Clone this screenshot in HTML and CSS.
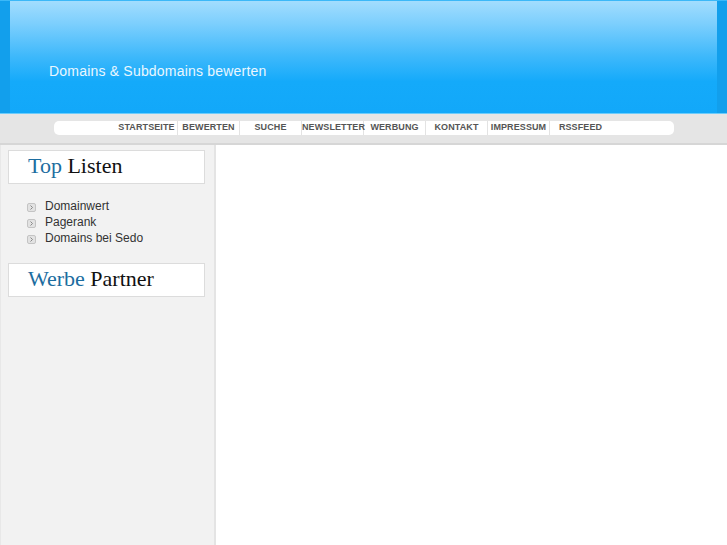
FILE: index.html
```html
<!DOCTYPE html>
<html lang="de">
<head>
<meta charset="utf-8">
<title>Domains &amp; Subdomains bewerten</title>
<link rel="stylesheet" href="styles.css">
</head>
<body>
<div class="header">
  <div class="header-inner">
    <div class="slogan">Domains &amp; Subdomains bewerten</div>
  </div>
</div>
<div class="navbar">
  <ul class="nav">
    <li>STARTSEITE</li>
    <li>BEWERTEN</li>
    <li>SUCHE</li>
    <li>NEWSLETTER</li>
    <li>WERBUNG</li>
    <li>KONTAKT</li>
    <li>IMPRESSUM</li>
    <li>RSSFEED</li>
  </ul>
</div>
<div class="page">
  <div class="sidebar">
    <div class="box"><span class="hl">Top</span> Listen</div>
    <ul class="links">
      <li><span class="bullet"><svg width="9" height="9" viewBox="0 0 9 9"><rect x="0.5" y="0.5" width="8" height="8" rx="1.5" fill="#e2e2e2" stroke="#c4c4c4"/><path d="M3.5 2.5 L5.5 4.5 L3.5 6.5" fill="none" stroke="#888" stroke-width="1"/></svg></span>Domainwert</li>
      <li><span class="bullet"><svg width="9" height="9" viewBox="0 0 9 9"><rect x="0.5" y="0.5" width="8" height="8" rx="1.5" fill="#e2e2e2" stroke="#c4c4c4"/><path d="M3.5 2.5 L5.5 4.5 L3.5 6.5" fill="none" stroke="#888" stroke-width="1"/></svg></span>Pagerank</li>
      <li><span class="bullet"><svg width="9" height="9" viewBox="0 0 9 9"><rect x="0.5" y="0.5" width="8" height="8" rx="1.5" fill="#e2e2e2" stroke="#c4c4c4"/><path d="M3.5 2.5 L5.5 4.5 L3.5 6.5" fill="none" stroke="#888" stroke-width="1"/></svg></span>Domains bei Sedo</li>
    </ul>
    <div class="box"><span class="hl">Werbe</span> Partner</div>
  </div>
  <div class="content"></div>
</div>
</body>
</html>
```
FILE: styles.css
```css
html, body {
  margin: 0;
  padding: 0;
  height: 100%;
}
body {
  font-family: "Liberation Sans", Arial, sans-serif;
  background: #ffffff;
  display: flex;
  flex-direction: column;
  overflow: hidden;
}
.header {
  flex: none;
  height: 114px;
  background: #129fec;
  border-top: 1px solid #3bb8f8;
  border-bottom: 1px solid #6cccfb;
  padding: 0 10px;
  box-sizing: border-box;
}
.header-inner {
  height: 100%;
  background: linear-gradient(to bottom, #a2ddfe 0%, #7dcffd 20%, #3db8fb 50%, #14aafa 72%, #12a8f9 100%);
  padding: 0 0 0 39px;
  display: flex;
  align-items: flex-start;
}
.slogan {
  margin-top: 62px;
  color: #eaf7ff;
  font-size: 14px;
  letter-spacing: 0.2px;
}
.navbar {
  flex: none;
  height: 22px;
  background: #e5e5e5;
  border-bottom: 2px solid #d6d6d6;
  padding: 7px 53px 0 54px;
}
.nav {
  list-style: none;
  margin: 0;
  height: 14px;
  background: #ffffff;
  border-radius: 5px;
  padding: 0 0 0 62px;
  display: flex;
}
.nav li {
  width: 61px;
  border-right: 1px solid #e3e3e3;
  text-align: center;
  font-size: 9px;
  font-weight: bold;
  color: #555555;
  line-height: 13px;
  letter-spacing: 0.1px;
  white-space: nowrap;
  flex: none;
}
.nav li:last-child {
  border-right: none;
}
.page {
  flex: 1;
  display: flex;
}
.sidebar {
  width: 216px;
  box-sizing: border-box;
  background: #f2f2f2;
  border-left: 1px solid #e8e8e8;
  border-right: 2px solid #e4e4e4;
  padding: 5px 0 0 7px;
}
.box {
  width: 197px;
  height: 34px;
  box-sizing: border-box;
  background: #ffffff;
  border: 1px solid #dcdcdc;
  font-family: "Liberation Serif", "Times New Roman", serif;
  font-size: 22px;
  line-height: 30px;
  padding-left: 19px;
  color: #111111;
}
.hl {
  color: #1c6da0;
}
.links {
  list-style: none;
  margin: 0;
  padding: 14px 0 17px 19px;
}
.links li {
  font-size: 12px;
  line-height: 16px;
  color: #333333;
  display: flex;
  align-items: center;
}
.bullet {
  width: 18px;
  display: flex;
  align-items: center;
  padding-top: 3px;
}
.content {
  flex: 1;
  background: #ffffff;
}
```
